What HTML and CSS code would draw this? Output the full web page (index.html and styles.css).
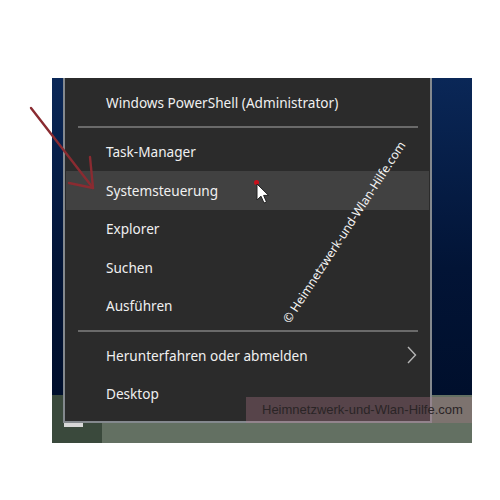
FILE: index.html
```html
<!DOCTYPE html>
<html lang="de">

<head>
    <meta charset="UTF-8">
    <meta name="viewport" content="width=device-width, initial-scale=1.0">
    <title>Schnellzugriffsmenü</title>
    <link rel="stylesheet" href="styles.css">
</head>

<body>

    <div class="screen">
        <div class="desktop"></div>
        <div class="band">
            <div class="band-start"></div>
            <div class="band-rest"></div>
        </div>

        <div class="menu">
            <div class="item">Windows PowerShell (Administrator)</div>
            <div class="sep"></div>
            <div class="item">Task-Manager</div>
            <div class="item active">Systemsteuerung</div>
            <div class="item">Explorer</div>
            <div class="item">Suchen</div>
            <div class="item">Ausführen</div>
            <div class="sep"></div>
            <div class="item">
                <span>Herunterfahren oder abmelden</span>
                <svg class="chevron" width="10" height="18" viewBox="0 0 10 18">
                    <polyline points="1,1 8.5,9 1,17" fill="none" stroke="#b5b5b5" stroke-width="1.4" />
                </svg>
            </div>
            <div class="item">Desktop</div>
        </div>

        <div class="taskbar-mark"></div>

        <div class="dot"></div>
        <svg class="cursor" width="14" height="22" viewBox="0 0 14 22">
            <path d="M1,1 L1,17 L5,13.2 L8,20 L10.5,19 L7.6,12.4 L12.6,12.4 Z" fill="#fff" stroke="#222" stroke-width="1" />
        </svg>

        <div class="diag">© Heimnetzwerk-und-Wlan-Hilfe.com</div>

        <div class="banner">Heimnetzwerk-und-Wlan-Hilfe.com</div>
    </div>

    <svg class="arrow" width="500" height="500" viewBox="0 0 500 500">
        <g fill="none" stroke="#8a2b31" stroke-width="2.4" stroke-linecap="round" stroke-linejoin="round">
            <line x1="31" y1="108" x2="93" y2="188" />
            <polyline points="90,157 93,188 69,183" />
        </g>
    </svg>

</body>

</html>
```

FILE: styles.css
```css
body {
    margin: 0;
    background: #ffffff;
    font-family: "Noto Sans", "Open Sans", sans-serif;
}

.screen {
    position: relative;
    margin: 78px 0 0 52px;
    width: 420px;
    height: 365px;
    display: flex;
    flex-direction: column;
}

.desktop {
    height: 317px;
    background: linear-gradient(180deg, #0a2757, #021436 60%, #000f2c);
}

.band {
    flex: 1;
    display: flex;
}

.band-start {
    width: 50px;
    background: #3a493c;
}

.band-rest {
    flex: 1;
    background: #637062;
}

.menu {
    position: absolute;
    left: 11px;
    top: 0;
    width: 369px;
    height: 345px;
    box-sizing: border-box;
    border: 2px solid #84898e;
    border-top: none;
    background: #2b2b2b;
    padding: 5px 1px 0;
}

.item {
    height: 38.5px;
    display: flex;
    align-items: center;
    justify-content: space-between;
    padding: 0 12px 0 40px;
    color: #f0f0f0;
    font-size: 13.6px;
}

.item.active {
    background: #414141;
}

.sep {
    height: 11px;
    display: flex;
    align-items: center;
    padding: 0 11px 0 12px;
}

.sep::after {
    content: "";
    flex: 1;
    border-top: 2px solid #6a6a6a;
}

.chevron {
    display: block;
}

.taskbar-mark {
    position: absolute;
    left: 12px;
    top: 345px;
    width: 19px;
    height: 4px;
    background: #d8d8d8;
}

.dot {
    position: absolute;
    left: 202px;
    top: 102px;
    width: 5px;
    height: 5px;
    border-radius: 50%;
    background: #c8101c;
}

.cursor {
    position: absolute;
    left: 204px;
    top: 105px;
}

.diag {
    position: absolute;
    left: 292px;
    top: 154px;
    transform: translate(-50%, -50%) rotate(-57deg);
    white-space: nowrap;
    color: #f4f4f4;
    font-size: 12.2px;
}

.banner {
    position: absolute;
    left: 194px;
    top: 319px;
    width: 226px;
    height: 26px;
    box-sizing: border-box;
    padding-left: 16px;
    line-height: 26px;
    white-space: nowrap;
    background: rgba(180, 120, 140, 0.33);
    color: #2a2426;
    font-family: "Liberation Sans", Arial, sans-serif;
    font-size: 13px;
}

.arrow {
    position: absolute;
    left: 0;
    top: 0;
    pointer-events: none;
}
```
